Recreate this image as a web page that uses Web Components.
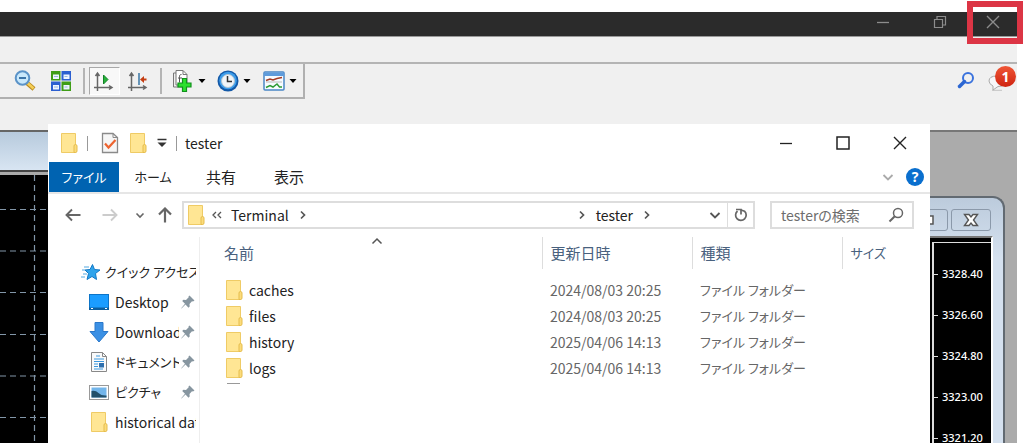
<!DOCTYPE html>
<html lang="ja">
<head>
<meta charset="utf-8">
<title>tester</title>
<style>
  html, body { margin: 0; height: 100%; }
  body { background: #fff; overflow: hidden; font: 14px/20px "Noto Sans CJK JP", "Noto Sans", sans-serif; color: #222; }
</style>
</head>
<body>
<terminal-app></terminal-app>
<script>
const ICONS = {
  zoomout: ['0 0 22 22', '<path d="M13 13l7 6" stroke="#b98a20" stroke-width="4.5"/><path d="M13.500 13l6 5.500" stroke="#f5cf57" stroke-width="2.500"/><circle cx="8.500" cy="8" r="6.800" fill="#c9e8fb" stroke="#5b93c8" stroke-width="2"/><path d="M5 8h7" stroke="#3c74a8" stroke-width="2"/>'],
  tile: ['0 0 22 22', '<path fill="#3f9d16" d="M1 1h9.500v9.500H1zM11.500 11.500H21V21h-9.500z"/><path fill="#2b5fd0" d="M11.500 1H21v9.500h-9.500zM1 11.500h9.500V21H1z"/><path fill="#eef5ff" d="M3 4.500h6v4.500H3zM13.500 4.500h6V9h-6zM3 15h6v4.500H3zM13.500 15h6v4.500h-6z"/><path stroke="#9bb9df" d="M4 6.500h4M14.500 6.500h3M4 17h4M14.500 17h3"/>'],
  autoscroll: ['0 0 22 22', '<path d="M4.500 21V3M1 17.500h18M2.500 6l2-3 2 3M16 15.500l3 2-3 2" fill="none" stroke="#666" stroke-width="1.500"/><path d="M10.500 5l4.500 4.500-4.500 4.500z" fill="#27b23b" stroke="#138427"/>'],
  shift: ['0 0 22 22', '<path d="M4.500 21V3M1 17.500h18M2.500 6l2-3 2 3M16 15.500l3 2-3 2" fill="none" stroke="#666" stroke-width="1.500"/><path d="M12 3v12" stroke="#3976a5" stroke-width="1.500"/><path d="M13 9.500l4-3.500v2.500h2.500v2H17V13z" fill="#c43c10"/>'],
  indicator: ['0 0 24 24', '<path d="M6.500 4h-3v14h10" fill="#eee" stroke="#777"/><path d="M6 1.500h7l4 4V16H6z" fill="#fff" stroke="#777"/><path d="M13 1.500v4h4" fill="none" stroke="#777"/><path d="M11.500 5.500c-2 0-2 1-2 3v5M8 9h4" fill="none" stroke="#555"/><path d="M12.500 9.500h4v4.500h4.500v4h-4.500v4.500h-4V18H8v-4h4.500z" fill="#2be02d" stroke="#11901d" stroke-width="1.200"/>'],
  clock: ['0 0 22 22', '<circle cx="11" cy="11" r="10.500" fill="#1359a8"/><circle cx="11" cy="10.500" r="8.800" fill="#3d9dea"/><circle cx="11" cy="11" r="6.500" fill="#f1f5f8" stroke="#b4c5d3"/><path d="M10.500 6v5.500H15" fill="none" stroke="#333" stroke-width="1.500"/>'],
  template: ['0 0 22 22', '<rect x="1" y="2" width="20" height="18" rx="1" fill="#f6fbff" stroke="#4a86c5" stroke-width="1.500"/><path d="M1 2.500h20v3.500H1z" fill="#5e9bdb"/><path d="M3 12h16" stroke="#bbb"/><path d="M3 10.500l4-1.500 3 1 4-1.500 5-1" fill="none" stroke="#a53b25" stroke-width="1.500"/><path d="M3 17.500l4-2 3 1.500 4-3 2.500 3h2.500" fill="none" stroke="#2c9a33" stroke-width="1.500"/>'],
  drop: ['0 0 8 8', '<path d="M.5 2h7L4 6z" fill="#000"/>'],
  search: ['0 0 18 18', '<circle cx="11" cy="7" r="5" fill="none" stroke="#3a72dd" stroke-width="2"/><path d="M7.500 10.500L2.500 15.500" stroke="#2b66d2" stroke-width="3.500" stroke-linecap="round"/>'],
  chat: ['0 0 22 22', '<path d="M5 21.500h10" stroke="#ccc" stroke-width="1.500"/><path d="M6 21v-4Q2 15 2 12q0-5 8-5 9 0 9 6 0 4-8 4.500z" fill="#f7f7f9" stroke="#aaa"/>'],
  min: ['0 0 14 14', '<path d="M1 7.500h12" stroke="currentColor" stroke-width="1.300"/>'],
  restore: ['0 0 14 14', '<path d="M1.500 4.500h8v8h-8zM4 4.500v-3h8.500v8.500H9.500" fill="none" stroke="currentColor" stroke-width="1.200"/>'],
  max: ['0 0 14 14', '<rect x="1" y="1" width="12" height="12" fill="none" stroke="currentColor" stroke-width="1.500"/>'],
  close: ['0 0 14 14', '<path d="M1 1l12 12M13 1L1 13" stroke="currentColor" stroke-width="1.400"/>'],
  folder: ['0 0 18 22', '<path d="M1.500 1.500h14v19h-14z" fill="#ffe694" stroke="#efcb65"/><path d="M14 20.500v-6.500q0-1.500 1.500-1.500t1.500 1.500v5q0 1.500-1.500 1.500z" fill="#fbdc7c" stroke="#e6bd4d"/>'],
  check: ['0 0 18 22', '<path d="M1.500 1.500h10.500l4.500 4v15h-15z" fill="#f6f6f6" stroke="#8a8a8a" stroke-width="1.300"/><path d="M12 1.500v4h4.500" fill="none" stroke="#8a8a8a"/><path d="M4 11.500l3.500 4 7-7.500" fill="none" stroke="#ed6430" stroke-width="2.200"/>'],
  qat: ['0 0 10 10', '<path d="M.5 1.500h9" stroke="#333" stroke-width="1.500"/><path d="M.5 4.500h9L5 9z" fill="#333"/>'],
  down: ['0 0 12 12', '<path d="M1.500 4L6 8.500 10.500 4" fill="none" stroke="currentColor" stroke-width="1.800"/>'],
  downsmall: ['0 0 12 12', '<path d="M2.500 4.500L6 8l3.500-3.500" fill="none" stroke="currentColor" stroke-width="1.600"/>'],
  up: ['0 0 12 12', '<path d="M1.500 8.500L6 4l4.500 4.500" fill="none" stroke="currentColor" stroke-width="1.500"/>'],
  right: ['0 0 12 12', '<path d="M4 2.500L7.500 6 4 9.500" fill="none" stroke="#555" stroke-width="1.700"/>'],
  twoleft: ['0 0 12 12', '<path d="M5 3L2 6l3 3M10 3L7 6l3 3" fill="none" stroke="#555" stroke-width="1.300"/>'],
  arrowl: ['0 0 16 16', '<path d="M15.500 8H1.500M7 2.500L1.500 8 7 13.500" fill="none" stroke="currentColor" stroke-width="1.900"/>'],
  arrowr: ['0 0 16 16', '<path d="M.5 8h14M9 2.500L14.500 8 9 13.500" fill="none" stroke="currentColor" stroke-width="1.900"/>'],
  arrowu: ['0 0 16 16', '<path d="M8 15.500V1.500M2 7.500l6-6 6 6" fill="none" stroke="currentColor" stroke-width="2.200"/>'],
  refresh: ['0 0 16 16', '<path d="M4.500 4A5.300 5.300 0 1 0 11.500 4.200L8 3" fill="none" stroke="#666" stroke-width="1.700"/><path d="M3 2.500h5v5" fill="none" stroke="#666" stroke-width="1.700"/>'],
  lens: ['0 0 16 16', '<circle cx="10" cy="6" r="4.500" fill="none" stroke="#666" stroke-width="1.500"/><path d="M6.800 9.200L1.500 14.500" stroke="#666" stroke-width="2"/>'],
  star: ['0 0 20 18', '<path d="M11.500 1.500l2 5 5.500.5-4.500 3.500 1 6-4.500-3-5 3 1.500-6L4 7l5-.5z" fill="#2fa4ec" stroke="#1379c6"/><path d="M3 4h5M1 7h3M2 11h4M0 14h4" stroke="#54a9e2" stroke-width="1.200"/>'],
  desktop: ['0 0 22 22', '<rect x="1.500" y="3.500" width="19" height="15" fill="#1b9dff" stroke="#0d75c8"/><path d="M1 16.500h20V19H1z" fill="#0c5f9f"/><path d="M3 17.500h2M17 17.500h2" stroke="#fff"/>'],
  download: ['0 0 22 22', '<path d="M7 1.500h8v9h5L11 21 2 10.500h5z" fill="#3b90e4" stroke="#2a78cb"/>'],
  document: ['0 0 22 22', '<path d="M3.500 1.500h11l4 4v15h-15z" fill="#fafafa" stroke="#888"/><path d="M14.500 1.500v4h4" fill="none" stroke="#888"/><path d="M8 5h4M6 8h10M6 10.500h10M6 13h4M6 15.500h4M6 18h9" stroke="#3b97dd" stroke-width="1.200"/><path d="M11 12h5v4.500h-5z" fill="#2d6fae"/>'],
  picture: ['0 0 22 22', '<rect x="1.500" y="4.500" width="19" height="14" fill="#fff" stroke="#999"/><path d="M3.500 6.500h15v10h-15z" fill="#72b5ea"/><path d="M3.500 10q4-1 7 2t8 2.500v2h-15z" fill="#23506a"/>'],
  pin: ['0 0 16 16', '<path d="M9.500 1.500l5 5-1.500 1-1-.2L9.500 10l.2 2.500-1.200 1.200-3-3.200L1.500 14.500l-.3-.3L5 9.800 2.200 7l1.200-1.200L6 6l2.700-2.700-.2-.8z" fill="#8796a0"/>'],
};
const define = (name, html) => {
  const t = document.createElement('template');
  t.innerHTML = html;
  customElements.define(name, class extends HTMLElement {
    constructor() { super(); this.attachShadow({ mode: 'open' }).append(t.content.cloneNode(true)); }
  });
};
const BTN = 'button{font:inherit;color:inherit;background:none;border:0;padding:0;margin:0;display:flex;align-items:center;justify-content:center}';

customElements.define('ui-icon', class extends HTMLElement {
  connectedCallback() {
    if (this.shadowRoot) return;
    const [box, body] = ICONS[this.getAttribute('name')];
    const [, , w, h] = box.split(' ');
    this.attachShadow({ mode: 'open' }).innerHTML =
      `<style>:host{display:block;flex:none}svg{display:block}</style><svg width="${w}" height="${h}" viewBox="${box}" aria-hidden="true">${body}</svg>`;
  }
});

define('app-titlebar', `<style>:host{display:flex;justify-content:flex-end;height:24px;background:#2b2b2b;border-bottom:1px solid #999;color:#8c8c8c}
${BTN} button{width:57px;height:20px}button:last-child{width:49px}</style>
<button aria-label="最小化"><ui-icon name="min"></ui-icon></button><button aria-label="元に戻す"><ui-icon name="restore"></ui-icon></button><button aria-label="閉じる"><ui-icon name="close"></ui-icon></button>`);

define('app-toolbar', `<style>:host{display:flex;justify-content:space-between;align-items:flex-start;height:66px;border-top:2px solid #b4b4b4}
${BTN}
.band{display:flex;align-items:center;width:303px;height:33px;border-right:2px solid #b0b0b0;border-bottom:2px solid #b0b0b0;box-sizing:content-box}
.band button{width:36px;height:28px}
.band button:first-child{margin-left:7px}
.band .menu{width:46px;gap:4px}
.band .on{width:31px;border:1px solid #a8a8a8;border-right-color:#fff;border-bottom-color:#fff;background:#f8f8f8;box-sizing:border-box}
i{width:2px;height:26px;margin:0 4px;background:#b4b4b4}
.right{display:flex;align-items:center;gap:12px;padding:5px 8px}
.chat{position:relative}
.badge{position:absolute;left:8px;top:-3px;width:21px;height:21px;border-radius:50%;background:linear-gradient(#ef5636,#cf2411);color:#fff;font:bold 14px/21px "Noto Sans",sans-serif;text-align:center}
</style>
<div class="band"><button aria-label="縮小"><ui-icon name="zoomout"></ui-icon></button><button aria-label="整列"><ui-icon name="tile"></ui-icon></button><i></i>
<button class="on" aria-label="自動スクロール"><ui-icon name="autoscroll"></ui-icon></button><button aria-label="チャートシフト"><ui-icon name="shift"></ui-icon></button><i></i>
<button class="menu" aria-label="インディケータ"><ui-icon name="indicator"></ui-icon><ui-icon name="drop"></ui-icon></button><button class="menu" aria-label="時間足"><ui-icon name="clock"></ui-icon><ui-icon name="drop"></ui-icon></button><button class="menu" aria-label="定型チャート"><ui-icon name="template"></ui-icon><ui-icon name="drop"></ui-icon></button></div>
<div class="right"><button aria-label="検索"><ui-icon name="search"></ui-icon></button><button class="chat"><ui-icon name="chat"></ui-icon><span class="badge">1</span></button></div>`);

define('chart-window', `<style>:host{display:flex;flex-direction:column;background:#000}
.title{height:38px;background:linear-gradient(#b7cadd,#d8e5f2);border-top:2px solid #666;border-bottom:2px solid #444;box-shadow:0 3px #aaa;margin-bottom:3px}
svg{flex:1;width:100%;min-height:0}</style>
<div class="title"></div>
<svg aria-hidden="true"><path d="M34.500 0v300M0 34.500h60M0 76h60M0 117.500h60M0 159.500h60M0 201h60M0 242.500h60" stroke="#8296a8" stroke-width="1.200" stroke-dasharray="6 4" fill="none"/></svg>`);

define('price-window', `<style>:host{display:flex;flex-direction:column;box-sizing:border-box;border:2px solid #626a72;border-bottom:0;border-radius:0 12px 0 0;background:linear-gradient(#bccbdc,#d5e1ef 60px);padding:0 10px 0 0}
${BTN}
.title{display:flex;justify-content:flex-end;align-items:center;gap:3px;height:38px;padding:6px 2px 0 0;box-sizing:border-box}
button{width:40px;height:22px;border:1px solid #8b99aa;border-radius:3px;color:#555;box-sizing:border-box}
.plot{flex:1;background:#000;border-right:2px solid #fff;border-top:2px solid #777;color:#fff;display:flex;justify-content:flex-end;overflow:hidden}
ol{list-style:none;margin:4px 0 0;padding:22px 0 0;width:57px;height:240px;border-left:2px solid #ddd;border-top:1px solid #ddd;font:500 11px/18px "Noto Sans",sans-serif}
li{display:flex;align-items:center;gap:4px;height:18px;margin-bottom:23px}
li::before{content:"";width:4px;height:1px;background:#ddd}
</style>
<div class="title"><button aria-label="最大化"><svg width="14" height="12"><path d="M2 2h10v8H2z" fill="#fff" stroke="#555" stroke-width="1.500"/><path d="M5 5h4v2H5z" fill="#555"/></svg></button><button aria-label="閉じる"><svg width="16" height="14" viewBox="0 0 16 14"><path d="M1.500 1.500H6l2 2.500 2-2.500h4.500L10.500 7l4 5.500H10L8 10l-2 2.500H1.500l4-5.500z" fill="#fff" stroke="#555" stroke-width="1.400"/></svg></button></div>
<div class="plot"><ol><li>3328.40</li><li>3326.60</li><li>3324.80</li><li>3323.00</li><li>3321.20</li></ol></div>`);

define('explorer-caption', `<style>:host{display:flex;align-items:center;height:38px;padding:0 2px 0 12px}
${BTN} .left{display:flex;align-items:center;flex:1}
i{width:1px;height:15px;background:#999;margin:0 13px 0 9px}
.q{margin-left:10px}.q+i{margin:0 8px 0 9px}
.fold{margin-left:10px}
.win{width:57px;height:36px;color:#222}h1{font:inherit;margin:0}</style>
<div class="left"><ui-icon name="folder"></ui-icon><i></i><button aria-label="プロパティ"><ui-icon name="check"></ui-icon></button><button class="fold" aria-label="新しいフォルダー"><ui-icon name="folder"></ui-icon></button><button class="q" aria-label="カスタマイズ"><ui-icon name="qat"></ui-icon></button><i></i><h1>tester</h1></div>
<button class="win" aria-label="最小化"><ui-icon name="min"></ui-icon></button><button class="win" aria-label="最大化"><ui-icon name="max"></ui-icon></button><button class="win" aria-label="閉じる"><ui-icon name="close"></ui-icon></button>`);

define('explorer-ribbon', `<style>:host{display:flex;align-items:center;height:30px;border-bottom:2px solid #e6e6e6;padding-left:1px;font-size:15px;font-feature-settings:"palt"}
${BTN} button{width:68px;height:30px}button.file{background:#0063b1;color:#fff;width:70px}.kana{font-size:13px}
nav{display:flex;flex:1}
button.exp{width:20px;color:#aaa}button.help{width:18px;height:18px;border-radius:50%;background:#0a6fce;color:#fff;font:bold 14px/18px "Noto Sans",sans-serif;margin:0 6px 0 8px}</style>
<nav><button class="file kana">ファイル</button><button class="kana">ホーム</button><button>共有</button><button>表示</button></nav><button class="exp" aria-label="リボンの展開"><ui-icon name="down"></ui-icon></button><button class="help">?</button>`);

define('explorer-address', `<style>:host{display:flex;align-items:center;height:28px;padding:7px 16px 8px}
${BTN} .nav{display:flex;align-items:center;color:#666;width:118px;box-sizing:border-box}
.nav button:nth-child(1){margin-left:1px}.nav button:nth-child(2){margin-left:21px;color:#ccc}.nav button:nth-child(3){margin-left:16px}.nav button:nth-child(4){margin-left:11px}
.path{display:flex;align-items:center;flex:1;height:28px;box-sizing:border-box;border:2px solid #ddd;padding-left:3px;min-width:0}
.path ui-icon[name=twoleft]{margin:0 8px 0 6px}
.path .t{margin:0 8px}
.gap{flex:1}.tail{width:42px}
.path .dd{width:24px;color:#555}
.path .ref{width:26px;height:24px;border-left:1px solid #ddd}
.find{display:flex;align-items:center;width:144px;height:28px;box-sizing:border-box;border:2px solid #ddd;margin-left:15px;padding:0 8px 0 9px}
input{flex:1;min-width:0;border:0;padding:0;background:none;outline:0;font:inherit;font-feature-settings:"palt"}
input::placeholder{color:#6d6d6d;opacity:1}</style>
<div class="nav"><button aria-label="戻る"><ui-icon name="arrowl"></ui-icon></button><button aria-label="進む"><ui-icon name="arrowr"></ui-icon></button><button aria-label="履歴"><ui-icon name="downsmall"></ui-icon></button><button aria-label="上へ"><ui-icon name="arrowu"></ui-icon></button></div>
<div class="path"><ui-icon name="folder"></ui-icon><ui-icon name="twoleft"></ui-icon><button>Terminal</button><ui-icon class="t" name="right"></ui-icon><span class="gap"></span><ui-icon class="t" name="right"></ui-icon><button>tester</button><ui-icon class="t" name="right"></ui-icon><span class="tail"></span><button class="dd" aria-label="以前の場所"><ui-icon name="down"></ui-icon></button><button class="ref" aria-label="更新"><ui-icon name="refresh"></ui-icon></button></div>
<div class="find"><input type="search" aria-label="testerの検索" placeholder="testerの検索"><ui-icon name="lens"></ui-icon></div>`);

customElements.define('nav-item', class extends HTMLElement {
  connectedCallback() {
    if (this.shadowRoot) return;
    this.attachShadow({ mode: 'open' }).innerHTML = `<style>:host{display:block;height:30px}
a{display:flex;align-items:center;height:30px;padding:0 3px 0 40px;gap:5px;color:#222;text-decoration:none;white-space:nowrap;font-feature-settings:"palt"}
:host([root]) a{padding-left:33px;gap:4px}
:host([kana]) a{font-size:13px}
span{flex:1;overflow:hidden;min-width:0}ui-icon[name=pin]{margin-left:-4px}ui-icon[name=folder]{margin:0 2px}</style>
<a href="#"><ui-icon name="${this.getAttribute('icon')}"></ui-icon><span><slot></slot></span>${this.hasAttribute('pinned') ? '<ui-icon name="pin"></ui-icon>' : ''}</a>`;
  }
});

define('nav-pane', `<style>:host{display:block;width:152px;box-sizing:border-box;border-right:1px solid #eee;padding-top:20px}</style>
<nav-item root kana icon="star">クイック アクセス</nav-item><nav-item pinned icon="desktop">Desktop</nav-item><nav-item pinned icon="download">Downloads</nav-item><nav-item pinned kana icon="document">ドキュメント</nav-item><nav-item pinned kana icon="picture">ピクチャ</nav-item><nav-item icon="folder">historical data</nav-item>`);

const rows = [['caches', '2024/08/03 20:25'], ['files', '2024/08/03 20:25'], ['history', '2025/04/06 14:13'], ['logs', '2025/04/06 14:13']];
define('file-list', `<style>:host{display:block;flex:1;min-width:0}
table{width:100%;border-collapse:collapse;table-layout:fixed;text-align:left;font-feature-settings:"palt"}
.d,.k{width:150px}.s{width:88px}
th{position:relative;height:32px;padding:0 0 0 8px;font-weight:400;font-size:15px;color:#49617e;box-sizing:border-box;border-right:1px solid #ddd}
th:first-child{padding-left:24px}th:last-child{border:0;font-size:13px}
th ui-icon{position:absolute;left:50%;top:-2px;color:#555}
tbody::before{content:"";display:block;height:8px}
td{height:26px;padding:0 0 0 8px;color:#666;white-space:nowrap;line-height:20px}
td:first-child{padding-left:25px;color:#222}
td:last-child{font-size:13px}
.n{display:flex;align-items:center;gap:6px}
hr{width:13px;height:0;border:0;border-top:1px solid #999;margin:2px 0 0 27px}</style>
<table><colgroup><col><col class="d"><col class="k"><col class="s"></colgroup><thead><tr><th>名前<ui-icon name="up"></ui-icon></th><th>更新日時</th><th>種類</th><th>サイズ</th></tr></thead>
<tbody>${rows.map(r => `<tr><td><div class="n"><ui-icon name="folder"></ui-icon>${r[0]}</div></td><td>${r[1]}</td><td>ファイル フォルダー</td></tr>`).join('')}</tbody></table><hr>`);

define('explorer-window', `<style>:host{display:flex;flex-direction:column;background:#fff;overflow:hidden}.body{display:flex;flex:1}</style>
<explorer-caption></explorer-caption><explorer-ribbon></explorer-ribbon><explorer-address></explorer-address><div class="body"><nav-pane></nav-pane><file-list></file-list></div>`);

define('terminal-app', `<style>:host{display:flex;flex-direction:column;position:relative;height:100vh;overflow:hidden;box-sizing:border-box;padding:12px 7px 0 0}
.menu{height:25px;background:#f0f0f0}app-toolbar{background:#f0f0f0}
.mdi{position:relative;flex:1;background:#ababab;box-shadow:inset 0 2px #777}
chart-window{position:absolute;left:0;top:0;bottom:0;width:60px}
price-window{position:absolute;right:12px;top:66px;bottom:0;width:100px}
explorer-window{position:absolute;left:48px;right:87px;top:-6px;bottom:0}
.mark{position:absolute;right:1px;top:1px;width:44px;height:31px;border:6px solid #dc3545}</style>
<app-titlebar></app-titlebar><div class="menu"></div><app-toolbar></app-toolbar><div class="mdi"><chart-window></chart-window><price-window></price-window><explorer-window></explorer-window></div><div class="mark"></div>`);
</script>
</body>
</html>
